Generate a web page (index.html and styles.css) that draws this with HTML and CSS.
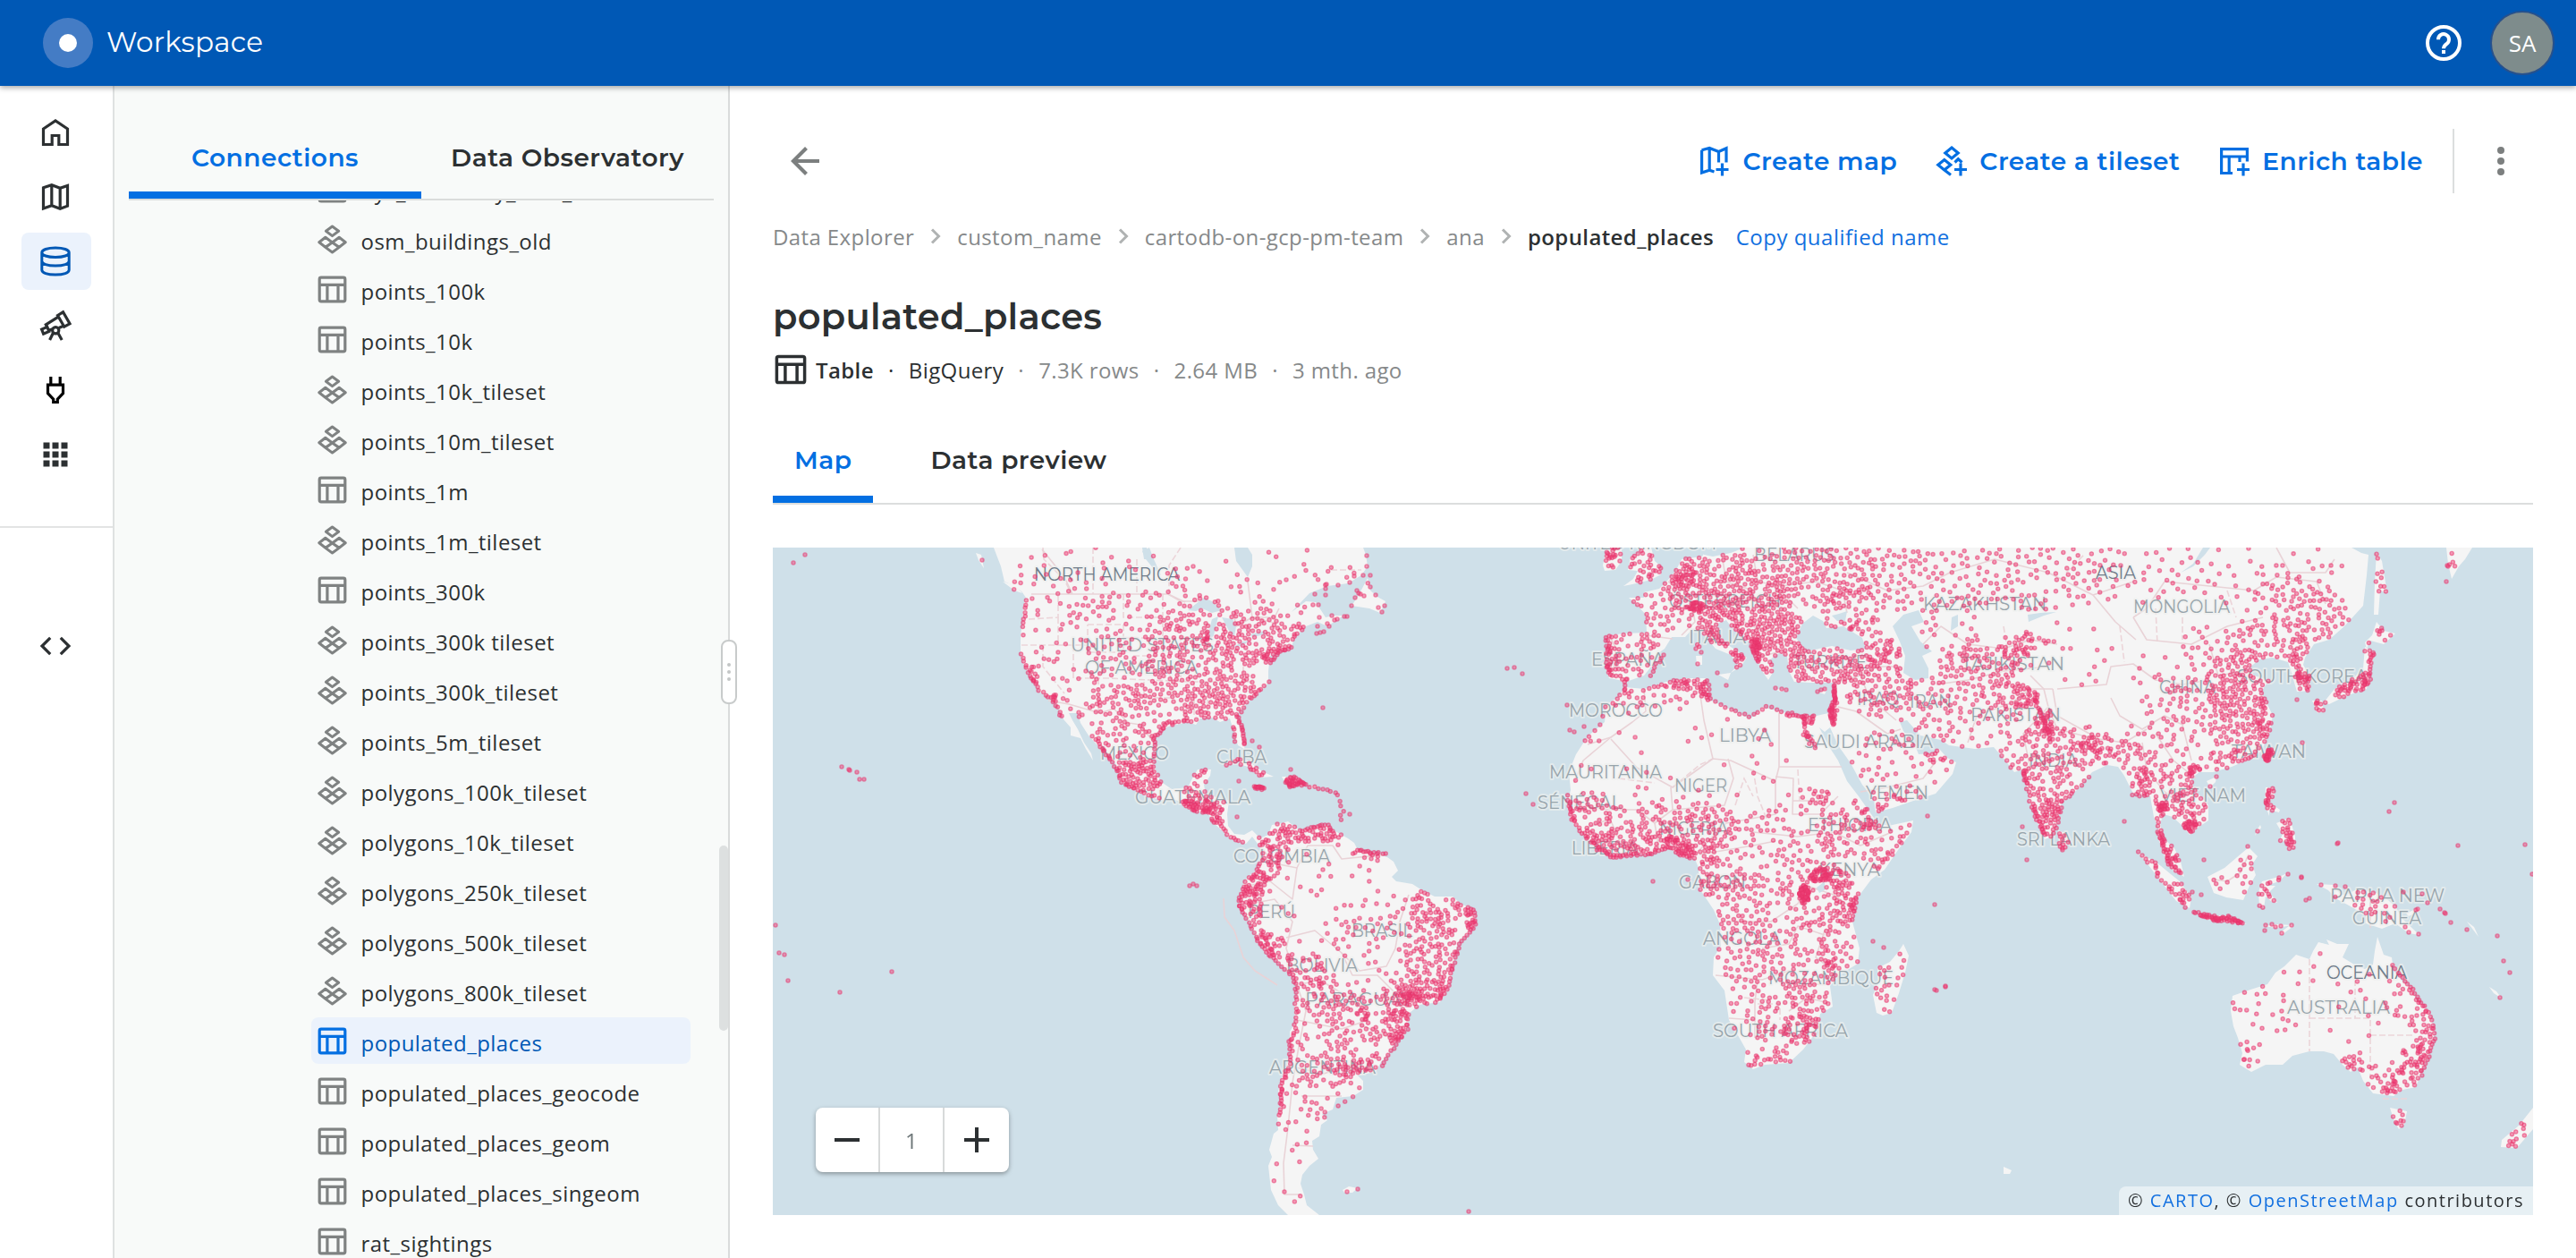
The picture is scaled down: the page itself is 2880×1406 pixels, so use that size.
FILE: index.html
```html
<!DOCTYPE html>
<html lang="en">
<head>
<meta charset="utf-8">
<title>Workspace - Data Explorer</title>
<link rel="stylesheet" href="styles.css">
</head>
<body>
<svg class="sprite" aria-hidden="true">
  <symbol id="i-table" viewBox="0 0 33 33"><g fill="none" stroke="currentColor" stroke-width="3.2"><rect x="2.2" y="3.1" width="28.6" height="26.8" rx="1.8"/><path d="M2 11.3H31M10.9 11.3V30M23 11.3V30"/></g></symbol>
  <symbol id="i-tiles" viewBox="0 0 33 33"><g fill="none" stroke="currentColor" stroke-width="3" stroke-linejoin="round"><path d="M16.5 2 23.6 7.3 16.5 12.6 9.4 7.3ZM8.8 14.2 16.5 20 8.8 25.2 1.8 19.7ZM24.2 14.2 31.2 19.7 24.2 25.2 16.5 20ZM16.5 20 24.2 25.4 16.5 31 8.8 25.4Z"/></g></symbol>
  <symbol id="i-chev" viewBox="0 0 12 20"><path d="M2 2.5 9.5 10 2 17.5" fill="none" stroke="currentColor" stroke-width="3"/></symbol>
</svg>

<header class="topbar">
  <div class="logo"><span class="logo-dot"></span></div>
  <span class="brand">Workspace</span>
  <svg class="help" viewBox="0 0 40 40"><circle cx="20" cy="20" r="18" fill="none" stroke="#fff" stroke-width="4"/><path d="M14 16.2a6 6 0 1 1 9.6 4.7c-2.2 1.7-3.6 2.6-3.6 5.4" fill="none" stroke="#fff" stroke-width="4"/><rect x="18" y="28" width="4" height="4" fill="#fff"/></svg>
  <div class="avatar">SA</div>
</header>

<div class="shell">
  <nav class="rail">
    <a class="rail-item"><svg viewBox="0 0 36 36"><path d="M4.5 31.5V14L18 5l13.500 9v17.500h-9.700v-10h-7.600v10Z"/></svg></a>
    <a class="rail-item"><svg viewBox="0 0 36 36"><path d="M4.500 7.800 13.800 4.800 23.200 8.200 31.500 5.500V28.200L23.200 31.200 13.800 27.800 4.500 31ZM13.800 5v23M23.200 8v23"/></svg></a>
    <a class="rail-item active"><svg viewBox="0 0 36 36"><path d="M2.800 8.200c0-3 6-5.200 15.200-5.200s15.200 2.200 15.200 5.200-6 5.300-15.200 5.300S2.800 11.200 2.800 8.200ZM2.800 8.200v19.600c0 3 6 5.300 15.200 5.300s15.200-2.300 15.200-5.300V8.200M2.800 17.800c0 3 6 5.300 15.200 5.300s15.200-2.300 15.200-5.300"/></svg></a>
    <a class="rail-item"><svg viewBox="0 0 36 36"><path d="M20.500 6.500 26.500 2.800 34 15.800 27.800 19.200ZM21.200 8.200 7.300 16.800 10.500 23.200M27 18.300 21.800 20.400M8.800 19.400 2.600 22.100 4.600 27.100 10.800 24.400ZM10.500 23.200 15.500 21.500M15.500 26 11.600 34M20.800 26 25.200 34" /><circle cx="18.200" cy="23.200" r="3.600"/></svg></a>
    <a class="rail-item plug"><svg viewBox="0 0 36 36"><path d="M12.800 3V12M23.200 3V12M9.500 12.200H26.500V21.500L20.300 28.200V31.500H15.700V28.200L9.500 21.500Z"/></svg></a>
    <a class="rail-item"><svg viewBox="0 0 36 36"><path class="solid" d="M4.500 4.500h7v7h-7zM14.500 4.500h7v7h-7zM24.500 4.500h7v7h-7zM4.500 14.500h7v7h-7zM14.500 14.500h7v7h-7zM24.500 14.500h7v7h-7zM4.500 24.500h7v7h-7zM14.500 24.500h7v7h-7zM24.500 24.500h7v7h-7z"/></svg></a>
    <hr class="rail-line">
    <a class="rail-item"><svg viewBox="0 0 36 36"><path d="M12.200 8.800 3 18l9.200 9.200M23.800 8.800 33 18l-9.200 9.200"/></svg></a>
  </nav>

  <aside class="sidebar">
    <div class="side-tabs">
      <button class="side-tab on">Connections</button>
      <button class="side-tab">Data Observatory</button>
    </div>
    <div class="tree-view">
      <ul class="tree" id="tree"></ul>
      <div class="scroll-thumb"></div>
    </div>
    <div class="grip"><i></i><i></i><i></i></div>
  </aside>

  <main class="main">
    <div class="toolbar">
      <svg class="back" viewBox="0 0 34 36"><path d="M33 18H4M18.500 3.500 4 18l14.500 14.500" fill="none" stroke="currentColor" stroke-width="4.200"/></svg>
      <div class="actions">
        <a class="action"><svg viewBox="0 0 36 36"><path d="M3.600 5.800 12.200 3.500 22.500 7.500 31 3.800V19.500M3.600 5.800V31L12.200 28.200 17.500 30M12.200 3.500V28.200M22.500 7.500V19.500M26.500 20.500V34.500M19.500 27.500H33.500"/></svg><span>Create map</span></a>
        <a class="action"><svg viewBox="0 0 36 36"><path d="M18 3 25.200 9 18 15 10.800 9ZM9.800 28 2.800 22.300 9.800 16.500 16.800 22.300 9.800 28 17 33.500M21.500 19.500 25.300 15.800 29.500 19.500M28 20.500V34.500M21 27.500H35"/></svg><span>Create a tileset</span></a>
        <a class="action"><svg viewBox="0 0 36 36"><path d="M16 31.500H3.600V4.600H32.400V18.500M3.600 13H32.400M12.200 13V31M24 13V19M28 20.500V34.500M21 27.500H35"/></svg><span>Enrich table</span></a>
      </div>
      <div class="kebab"><i></i><i></i><i></i></div>
    </div>

    <div class="crumbs">
      <span>Data Explorer</span><svg><use href="#i-chev"/></svg>
      <span>custom_name</span><svg><use href="#i-chev"/></svg>
      <span>cartodb-on-gcp-pm-team</span><svg><use href="#i-chev"/></svg>
      <span>ana</span><svg><use href="#i-chev"/></svg>
      <b>populated_places</b>
      <a class="copy">Copy qualified name</a>
    </div>

    <h1 class="title">populated_places</h1>

    <div class="meta">
      <svg><use href="#i-table"/></svg>
      <b>Table</b><i>·</i><span class="dark">BigQuery</span><i class="soft">·</i><span>7.3K rows</span><i class="soft">·</i><span>2.64 MB</span><i class="soft">·</i><span>3 mth. ago</span>
    </div>

    <div class="tabs">
      <button class="tab on">Map</button>
      <button class="tab">Data preview</button>
    </div>

    <section class="map" id="map">
      <svg class="base" viewBox="864 612 1968 746" id="base"></svg>
      <canvas class="points" id="points" width="1968" height="746"></canvas>
      <div class="zoom">
        <button><svg viewBox="0 0 28 28"><path d="M0 14H28"/></svg></button>
        <span>1</span>
        <button><svg viewBox="0 0 28 28"><path d="M0 14H28M14 0V28"/></svg></button>
      </div>
      <div class="credit">© <a>CARTO</a>, © <a>OpenStreetMap</a> contributors</div>
    </section>
  </main>
</div>
<script src="map.js"></script>
</body>
</html>
```
FILE: styles.css
```css
* { box-sizing: border-box; }
html, body { margin: 0; height: 100%; }
body {
  display: flex; flex-direction: column; overflow: hidden;
  background: #fff; color: #2c3032;
  font-family: "Open Sans", "Noto Sans", sans-serif; font-size: 24px; letter-spacing: 0.5px;
}
button { border: 0; background: none; padding: 0; margin: 0; color: inherit; font: inherit; letter-spacing: inherit; }
ul { list-style: none; margin: 0; padding: 0; }
i { font-style: normal; }
.sprite { display: none; }

.topbar {
  flex: none; height: 96px; display: flex; align-items: center; padding: 0 24px 0 48px;
  background: #0058b5; color: #fff; box-shadow: 0 2px 6px rgba(0, 0, 0, .35); z-index: 3;
}
.logo { width: 56px; height: 56px; border-radius: 50%; background: #447cc5; display: grid; place-items: center; }
.logo-dot { width: 20px; height: 20px; border-radius: 50%; background: #fff; }
.brand { margin-left: 15px; font: 400 31px/48px Montserrat, Inter, sans-serif; letter-spacing: .3px; padding-bottom: 2px; }
.help { width: 40px; height: 40px; margin-left: auto; margin-right: 32px; }
.avatar {
  width: 72px; height: 72px; border-radius: 50%; border: 2px solid #27518c; background: #7e8c8c;
  display: grid; place-items: center; font-size: 26px; letter-spacing: 0;
}

.shell { flex: 1; min-height: 0; display: flex; }

.rail { width: 128px; flex: none; border-right: 2px solid #dfe1e1; padding-top: 20px; display: flex; flex-direction: column; align-items: center; }
.rail-item { width: 78px; height: 64px; margin-bottom: 8px; display: grid; place-items: center; border-radius: 8px; }
.rail-item svg { width: 36px; height: 36px; margin-right: 2px; fill: none; stroke: #2c3032; stroke-width: 3.2; }
.rail-item .solid { fill: #2c3032; stroke: none; }
.rail-item.active { background: #ebf2fc; }
.rail-item.active svg { stroke: #0058b5; stroke-width: 3; }
.rail-item.plug svg { stroke: #000; }
.rail-line { width: 100%; height: 2px; border: 0; margin: 40px 0 100px; background: #e3e4e4; flex: none; }

.sidebar { width: 688px; flex: none; display: flex; flex-direction: column; background: #f8faf9; border-right: 2px solid #d9dbdb; position: relative; }
.side-tabs { flex: none; margin: 32px 16px 0; height: 96px; border-bottom: 2px solid #dadcdb; display: grid; grid-template-columns: 1fr 1fr; }
.side-tab { border-bottom: 8px solid transparent; padding-top: 9px; }
.side-tab, .tab { font: 600 28px/36px Montserrat, Inter, sans-serif; letter-spacing: .5px; }
.on { color: #036fe2; border-bottom-color: #036fe2; }
.tree-view { flex: 1; min-height: 0; overflow: hidden; position: relative; }
.tree { margin: -39px 42px 0 220px; }
.tree li { height: 52px; margin-bottom: 4px; padding-left: 7px; border-radius: 8px; display: flex; align-items: center; }
.tree svg { width: 33px; height: 33px; color: #7f8282; margin-right: 15.500px; }
.tree span { padding-top: 5px; letter-spacing: .45px; }
.tree .sel { background: #ebf2fc; color: #0058b5; }
.tree .sel svg { color: #036fe2; }
.scroll-thumb { position: absolute; right: 0; top: 721px; width: 10px; height: 207px; border-radius: 5px; background: #dde0e0; }
.grip {
  position: absolute; right: -10px; top: 619px; width: 18px; height: 72px; border: 2px solid #c8cbcb; border-radius: 8px;
  background: #fff; z-index: 2; display: flex; flex-direction: column; align-items: center; justify-content: center; gap: 4px;
}
.grip i { width: 4px; height: 4px; border-radius: 50%; background: #c3c6c6; }

.main { flex: 1; min-width: 0; padding: 48px 48px 0; display: flex; flex-direction: column; }
.toolbar { flex: none; height: 72px; display: flex; align-items: center; }
.back { width: 34px; height: 36px; margin-left: 19px; color: #7c7f7f; }
.actions { margin-left: auto; display: flex; gap: 43px; padding-right: 33px; height: 72px; border-right: 2px solid #dcdede; align-items: center; }
.action { display: flex; align-items: center; gap: 13px; color: #036fe2; font: 600 28px/36px Montserrat, Inter, sans-serif; letter-spacing: .5px; white-space: nowrap; }
.action svg { width: 36px; height: 36px; fill: none; stroke: #036fe2; stroke-width: 3.2; }
.kebab { width: 8px; margin: 0 32px 0 48px; display: grid; gap: 4px; }
.kebab i { width: 8px; height: 8px; border-radius: 50%; background: #7c7f7f; }

.crumbs { flex: none; margin-top: 28px; height: 40px; display: flex; align-items: center; color: #86898a; white-space: nowrap; letter-spacing: .4px; }
.crumbs svg { width: 12px; height: 20px; margin: 0 18px; color: #b0b3b3; }
.crumbs b, .meta b { font-weight: 600; color: #2c3032; }
.copy { margin-left: 24.500px; color: #1270e0; letter-spacing: .5px; }

.title { flex: none; margin: 46px 0 0; font: 600 40px/48px Montserrat, Inter, sans-serif; letter-spacing: .25px; height: 48px; }
.meta { flex: none; margin-top: 15px; height: 40px; display: flex; align-items: center; color: #86898a; white-space: nowrap; letter-spacing: .38px; }
.meta svg { width: 36px; height: 36px; color: #2c3032; margin: 0 10px 0 2px; }
.meta i { width: 39px; text-align: center; color: #2c3032; }
.meta .soft { color: #86898a; }
.meta .dark { color: #2c3032; }

.tabs { flex: none; margin-top: 37px; height: 94px; border-bottom: 2px solid #dcdede; display: flex; gap: 40px; }
.tab { border-bottom: 8px solid transparent; padding: 4px 24px 0; }
.tab.on, .side-tab.on { border-bottom-color: #036fe2; }

.map { position: relative; flex: none; margin-top: 48px; height: 746px; background: #cfe0e9; overflow: hidden; }
.base, .points { position: absolute; inset: 0; width: 1968px; height: 746px; }
.land { fill: #f5f5f5; }
.water { fill: #cfe0e9; }
.border { fill: none; stroke: #e9d3d7; stroke-width: 1.6; stroke-linejoin: round; }
.state { fill: none; stroke: #ecd5d9; stroke-width: 1.6; stroke-dasharray: 7 3; }
.lbl { font: 400 20px Montserrat, Inter, sans-serif; letter-spacing: 0; fill: #97a4ab; stroke: rgba(238, 240, 238, .65); stroke-width: 4px; paint-order: stroke; stroke-linejoin: round; }
.lbl.big { fill: #6f7c8a; }
.zoom {
  position: absolute; left: 48px; top: 626px; width: 216px; height: 72px; border-radius: 8px; background: #fff;
  box-shadow: 0 2px 5px rgba(0, 0, 0, .35); display: grid; grid-template-columns: 70px 74px 72px; align-items: stretch;
}
.zoom > * { display: grid; place-items: center; }
.zoom span { border: solid #d8dada; border-width: 0 2px; color: #6d7678; }
.zoom svg { width: 28px; height: 28px; stroke: #2c3032; stroke-width: 4; }
.credit {
  position: absolute; right: 0; bottom: 0; height: 32px; padding: 0 10px 0 10px; border-top-left-radius: 8px;
  background: rgba(255, 255, 255, .5); font-size: 20px; line-height: 32px; letter-spacing: 1.5px; white-space: nowrap;
}
.credit a { color: #1270e0; }
```
FILE: map.js
```js
// Sidebar resources: t = tileset, d = table
const items = [
  ["d", "nyc_boundary_data_old"], ["t", "osm_buildings_old"], ["d", "points_100k"], ["d", "points_10k"],
  ["t", "points_10k_tileset"], ["t", "points_10m_tileset"], ["d", "points_1m"], ["t", "points_1m_tileset"],
  ["d", "points_300k"], ["t", "points_300k tileset"], ["t", "points_300k_tileset"], ["t", "points_5m_tileset"],
  ["t", "polygons_100k_tileset"], ["t", "polygons_10k_tileset"], ["t", "polygons_250k_tileset"],
  ["t", "polygons_500k_tileset"], ["t", "polygons_800k_tileset"], ["d", "populated_places"],
  ["d", "populated_places_geocode"], ["d", "populated_places_geom"], ["d", "populated_places_singeom"], ["d", "rat_sightings"]
];
document.getElementById("tree").innerHTML = items.map(([k, n]) =>
  `<li${n === "populated_places" ? ' class="sel"' : ""}><svg><use href="#i-${k === "t" ? "tiles" : "table"}"/></svg><span>${n}</span></li>`).join("");

// Land outlines
const land = [
  // Americas
  "1111,612 1114,620 1119,633 1123,650 1135,655 1143,662 1147,668 1144,677 1143,697 1141,710 1141,730 1144,742 1150,752 1156,763 1162,773 1174,780 1181,787 1186,797 1189,804 1197,813 1197,822 1208,825 1214,837 1222,850 1220,842 1212,830 1205,815 1199,805 1195,797 1205,797 1208,808 1217,822 1226,832 1237,843 1247,853 1250,863 1254,875 1266,882 1279,888 1299,895 1306,892 1317,895 1324,902 1337,907 1351,910 1357,920 1368,930 1375,937 1384,940 1393,943 1400,935 1406,943 1410,950 1411,960 1404,973 1395,980 1390,988 1387,998 1385,1012 1392,1022 1398,1032 1406,1050 1415,1065 1426,1073 1441,1086 1448,1095 1451,1108 1447,1123 1448,1143 1442,1153 1443,1173 1440,1187 1432,1207 1429,1220 1432,1233 1428,1247 1429,1263 1424,1267 1419,1285 1422,1293 1418,1303 1421,1330 1429,1347 1440,1358 1475,1358 1461,1347 1458,1335 1454,1323 1456,1313 1464,1303 1474,1295 1468,1285 1467,1275 1475,1270 1477,1257 1484,1252 1478,1245 1490,1240 1494,1227 1513,1225 1524,1218 1524,1208 1518,1202 1538,1198 1544,1187 1553,1177 1561,1163 1570,1157 1575,1140 1576,1132 1587,1123 1610,1120 1618,1107 1623,1090 1626,1070 1630,1053 1642,1043 1650,1032 1648,1017 1633,1010 1624,1002 1604,1002 1590,995 1579,988 1561,985 1556,980 1563,973 1558,963 1551,958 1534,953 1518,950 1514,942 1507,937 1491,928 1484,922 1467,925 1453,928 1440,918 1433,920 1422,922 1418,933 1409,937 1400,928 1391,933 1380,932 1373,923 1372,910 1374,895 1364,892 1348,888 1346,877 1353,867 1354,860 1339,860 1333,870 1328,880 1310,882 1297,873 1292,860 1288,847 1290,830 1293,820 1306,812 1328,807 1337,810 1342,803 1355,802 1364,807 1375,803 1380,820 1384,833 1391,837 1393,827 1384,807 1384,797 1395,785 1409,773 1418,763 1418,750 1420,733 1427,730 1444,723 1447,713 1460,700 1473,695 1484,700 1502,688 1490,688 1482,690 1471,673 1460,672 1444,684 1464,663 1484,655 1507,652 1522,643 1529,633 1527,620 1524,612",
  "1529,646 1518,667 1511,677 1531,680 1543,685 1549,672 1540,667 1532,660",
  "1121,650 1135,654 1143,663 1134,660", "1091,618 1097,620 1100,635 1094,626",
  "1368,857 1380,848 1395,850 1411,862 1424,868 1409,869 1395,857 1380,852", "1433,868 1449,868 1460,877 1440,880", "1402,878 1416,880 1410,883 1402,881", "1465,878 1473,878 1472,881 1465,881",
  "1501,1330 1508,1326 1518,1328 1512,1333 1503,1333",
  // Africa, Europe and Asia
  "1909,612 1903,622 1880,625 1874,637 1865,648 1855,658 1838,662 1838,668 1821,668 1831,677 1840,687 1841,707 1817,708 1797,710 1798,733 1795,747 1799,758 1810,760 1815,763 1838,755 1846,745 1850,733 1861,725 1869,712 1884,712 1892,703 1903,707 1918,725 1935,732 1943,743 1935,752 1947,744 1953,735 1935,723 1920,708 1920,697 1930,693 1935,700 1956,718 1962,733 1970,750 1977,760 1983,750 1979,737 1989,730 1998,733 2000,750 2006,762 2023,763 2044,763 2052,763 2050,780 2044,797 2031,800 2010,800 1989,795 1970,790 1962,800 1956,803 1935,793 1911,782 1909,770 1907,758 1884,758 1863,762 1838,770 1817,768 1808,780 1796,787 1794,807 1775,823 1762,843 1754,863 1756,883 1752,900 1756,917 1770,933 1785,950 1804,960 1825,955 1842,955 1867,948 1880,958 1895,960 1899,970 1899,992 1908,1005 1916,1017 1923,1033 1924,1057 1916,1070 1915,1090 1928,1107 1933,1140 1943,1157 1952,1173 1950,1187 1960,1195 1973,1190 2000,1188 2016,1173 2031,1153 2035,1133 2049,1125 2046,1102 2056,1090 2077,1077 2079,1060 2071,1030 2077,1003 2092,983 2107,972 2122,950 2137,930 2139,917 2111,923 2099,920 2092,910 2078,890 2065,873 2055,850 2044,833 2034,813 2040,818 2046,813 2055,833 2069,853 2082,877 2095,893 2097,908 2116,903 2145,893 2164,887 2183,865 2187,852 2177,847 2168,837 2162,842 2145,843 2141,833 2128,817 2124,807 2132,805 2147,822 2170,827 2179,833 2208,837 2229,835 2242,850 2252,863 2261,860 2267,883 2269,897 2278,920 2286,938 2295,935 2300,920 2305,897 2322,883 2339,863 2356,855 2368,857 2375,867 2385,887 2404,890 2408,913 2413,925 2413,938 2421,960 2429,972 2442,980 2438,963 2431,948 2419,937 2415,920 2419,910 2429,913 2440,923 2448,933 2457,925 2469,917 2469,900 2453,882 2450,870 2459,863 2474,863 2495,857 2511,850 2528,840 2537,820 2541,800 2533,783 2528,773 2537,760 2520,755 2514,747 2526,737 2541,735 2558,740 2562,752 2568,773 2583,772 2583,757 2575,743 2577,735 2587,720 2604,715 2621,700 2642,677 2646,643 2648,620 2640,618 2629,612",
  "1838,612 1829,620 1823,622 1820,637 1831,638 1826,647 1815,655 1825,653 1846,648 1857,642 1857,633 1850,627 1846,612", "1796,612 1792,632 1794,638 1806,637 1813,627 1813,612",
  "1896,733 1903,733 1903,743 1897,743", "1897,718 1901,720 1900,728 1896,726", "1921,754 1935,752 1932,760", "1984,770 1999,771 1990,773", "2034,774 2043,769 2040,776",
  "2128,1055 2134,1068 2130,1087 2123,1110 2115,1132 2105,1135 2098,1132 2094,1112 2100,1098 2099,1082 2113,1075 2123,1063",
  "2301,928 2309,931 2313,940 2307,952 2302,945",
  "2390,953 2410,963 2427,977 2437,985 2450,1003 2448,1015 2433,1007 2412,980 2399,963", "2454,1020 2468,1024 2490,1023 2512,1033 2490,1031 2468,1028",
  "2514,947 2524,957 2518,966 2522,978 2515,990 2508,1006 2489,1003 2475,998 2468,980 2487,970",
  "2529,985 2548,980 2557,976 2548,985 2533,990 2544,990 2537,997 2546,1009 2540,1008 2533,1002 2531,1015 2526,1013 2525,997",
  "2590,988 2609,989 2617,1000 2624,1000 2636,993 2663,1000 2678,1013 2686,1027 2705,1045 2693,1043 2678,1032 2663,1038 2645,1032 2645,1023 2626,1012 2613,1005 2603,995",
  "2690,1021 2705,1014 2706,1018 2693,1024", "2529,1035 2545,1033 2562,1034 2546,1037", "2548,1043 2562,1033 2564,1035 2551,1045",
  "2533,880 2541,880 2543,887 2537,897 2549,905 2548,908 2537,905 2537,912 2532,898", "2545,920 2560,914 2566,935 2566,947 2559,950 2556,940 2548,941 2552,932", "2527,922 2528,925 2521,934 2523,928",
  "2539,837 2542,840 2537,851 2532,853 2531,845", "2467,873 2478,868 2477,874 2471,880",
  "2644,723 2655,730 2650,750 2646,770 2625,777 2604,787 2598,785 2610,770 2629,760 2642,747", "2585,783 2596,783 2598,795 2591,797", "2657,695 2665,705 2678,708 2665,720 2650,716 2646,725 2644,718 2652,710",
  "2657,617 2663,627 2669,663 2661,660 2659,687 2654,687 2655,650", "2735,612 2737,630 2741,647 2749,633 2756,625 2764,612",
  "2601,1050 2613,1055 2626,1055 2619,1070 2632,1078 2644,1083 2653,1078 2655,1063 2658,1047 2665,1067 2674,1070 2676,1085 2686,1097 2697,1105 2701,1117 2716,1130 2722,1153 2718,1173 2709,1193 2701,1215 2686,1218 2676,1225 2653,1222 2642,1208 2636,1193 2628,1198 2619,1190 2609,1178 2598,1175 2582,1175 2563,1180 2552,1190 2533,1190 2517,1198 2504,1190 2507,1177 2502,1160 2497,1147 2494,1130 2496,1113 2510,1108 2535,1100 2544,1087 2554,1080 2567,1067 2582,1072 2586,1063 2592,1053 2604,1056",
  "2672,1238 2691,1242 2688,1257 2682,1262 2677,1254", "2832,1238 2832,1262 2814,1283 2796,1282 2797,1274 2816,1258", "2783,1103 2791,1108 2797,1116 2788,1110", "2240,1304 2249,1308 2247,1312 2240,1312", "2758,1030 2766,1036 2771,1047"
];
const water = [
  "1380,612 1382,627 1395,645 1400,633 1400,620 1395,612", "1285,612 1290,625 1298,643 1290,636 1281,625 1277,616", "1277,612 1282,612 1283,625 1279,625",
  "1328,682 1346,668 1355,672 1366,682 1355,685 1344,680 1337,683", "1351,707 1355,692 1362,689 1357,710 1353,715", "1366,690 1378,692 1382,700 1380,711 1374,705", "1377,724 1390,717 1397,716 1390,721", "1398,709 1414,705 1415,709 1400,712",
  "2008,713 2015,697 2027,688 2038,694 2042,702 2061,700 2082,713 2086,725 2069,727 2048,722 2019,728", "2048,688 2056,686 2065,683 2063,694 2054,694", "1984,735 1992,730 1994,735 1988,741",
  "2116,700 2128,687 2145,682 2151,695 2137,700 2147,717 2160,728 2149,733 2156,747 2156,758 2141,760 2128,752 2130,733 2124,717",
  "2031,992 2040,985 2040,995 2034,998", "2438,640 2452,633 2465,620 2471,612 2463,612 2452,630", "2182,690 2189,687 2189,700 2181,705", "2267,687 2281,685 2299,684 2285,688 2268,695", "1899,612 1909,612 1935,612 1950,612 1935,618 1915,622 1905,620"
];
const borders = [
  "1153,664 1306,664 1320,672 1340,672", "1306,664 1325,673", "1380,690 1382,700 1400,690 1425,690 1430,680", "1172,783 1195,787 1230,797 1245,792 1262,808 1275,810 1290,830", "1165,614 1190,645 1199,664", "1395,650 1400,690 1428,697",
  "1408,945 1425,965 1450,970 1462,945 1490,945 1500,960 1550,955", "1395,990 1420,985 1445,1005 1450,970", "1398,1010 1425,1005 1445,1030 1438,1060 1448,1090", "1438,1048 1470,1040 1500,1065 1520,1085 1550,1080 1560,1060 1565,1030 1575,1000", "1455,1100 1475,1095 1500,1110 1530,1130 1520,1145 1555,1160", "1448,1095 1460,1130 1452,1170 1445,1210 1440,1260 1435,1300 1436,1335 1455,1335", "1445,1280 1468,1281", "1500,1065 1512,1090 1540,1090 1560,1110", "1450,1140 1500,1150 1530,1140", "1435,1190 1480,1200 1510,1190", "1455,1225 1500,1225", "1368,1004 1369,1025 1380,1040 1390,1070 1403,1085 1428,1101",
  "1775,832 1801,824 1825,807 1840,795 1838,770", "1801,824 1770,850 1760,875", "1801,826 1830,858 1870,880 1915,848 1905,805 1900,770", "1915,848 1935,850 1985,873 1989,857 1989,797", "1989,857 2059,857", "1932,848 1938,870 1928,900 1870,905 1868,880", "1985,873 1985,910 1930,920 1900,950", "1985,868 2005,870 2004,910 2035,910 2055,890", "2005,895 2040,895", "1960,930 2010,935 2050,930 2080,945 2115,930", "1760,900 1800,905 1830,905 1850,920 1870,905", "1775,925 1800,915 1815,950", "1850,920 1855,950", "1900,955 1930,950 1960,945 1985,940", "1925,1030 1980,1030 2010,1010 2020,990 2050,1000 2077,1020", "1918,1090 1970,1095 2000,1085 2015,1100 2045,1100", "1965,1095 1962,1120 1962,1160", "1933,1138 1962,1140", "2000,1130 2020,1115 2040,1120", "2040,1040 2030,1070 2050,1085", "1970,1060 2000,1055 2010,1035 2040,1045",
  "1800,712 1807,725 1803,755", "1840,710 1870,714", "1865,650 1890,665 1895,695 1880,710", "1895,665 1930,665 1960,670 1990,660 2010,680", "1925,620 1930,650 1960,660", "1960,620 1965,650 1990,655 2030,650 2060,660 2065,685", "1930,690 1950,695 1970,705 2000,705", "1965,735 1990,728", "2052,763 2080,755 2100,745 2125,745", "2080,755 2090,780 2120,805", "2055,790 2075,795 2110,820 2125,815", "2080,885 2110,880 2150,870 2165,850",
  "2065,640 2110,660 2150,655 2180,640 2230,625 2290,640 2340,665 2385,650", "2150,720 2170,700 2200,720 2240,725 2270,715 2300,720", "2165,765 2200,760 2240,750 2290,745", "2200,830 2210,800 2250,785 2270,770 2295,770", "2270,860 2262,820 2290,790 2285,770 2270,755",
  "2290,790 2300,815 2340,825 2375,830 2400,815", "2385,690 2400,680 2420,650 2470,655 2520,660 2545,645 2590,650 2600,675", "2385,690 2400,715 2450,720 2490,700 2530,690", "2295,770 2300,800 2345,825", "2300,770 2355,765 2360,745 2385,742 2410,760 2440,765 2470,760", "2340,665 2365,695 2388,715", "2360,780 2370,800 2395,815 2420,800 2440,810 2450,850", "2470,720 2480,755 2510,750", "2410,820 2430,850 2455,870", "2395,830 2400,860 2420,885 2440,900", "2650,1000 2650,1037", "2514,955 2505,975 2490,985 2475,983", "2545,612 2560,640 2600,640 2610,625"
];
const states = [
  "1166,612 1167,625 1190,648 1198,664", "1222,612 1222,664", "1271,625 1271,664", "1320,612 1307,632 1307,662", "1150,692 1183,690 1183,664", "1142,721 1200,721 1216,721", "1183,690 1183,721", "1166,721 1166,745 1190,775", "1200,721 1200,758 1240,758 1330,762 1400,762", "1228,758 1228,795", "1216,698 1256,698 1256,729 1216,729 1216,698", "1256,664 1256,690 1300,690", "1256,713 1300,713", "1228,729 1228,758", "1267,733 1310,733", "1279,762 1279,780 1310,780", "1300,664 1300,733 1310,760 1310,780", "1320,690 1320,760", "1335,762 1335,800", "1350,762 1350,800", "1390,735 1390,760", "1488,637 1522,637",
  "2582,1072 2582,1175", "2582,1138 2650,1138 2650,1205", "2633,1095 2633,1138", "2650,1157 2700,1157", "2664,1228 2692,1228",
  "1870,880 1900,855 1915,848", "1940,900 1950,870 1960,890", "1960,860 1965,890 1975,915", "2010,860 2012,895", "1810,870 1850,875", "2240,700 2245,730", "2310,640 2330,620", "2370,700 2375,740", "2410,680 2412,720", "2440,690 2440,715", "2490,660 2500,690", "1950,1115 1980,1118", "1965,1122 1990,1122 1990,1140"
];
const labels = [
  ["NORTH AMERICA", 1156, 1319, 649, 1], ["UNITED STATES", 1197, 1357, 728], ["OF AMERICA", 1213, 1339, 753], ["MÉXICO", 1230, 1307, 849], ["CUBA", 1360, 1416, 853], ["GUATEMALA", 1269, 1398, 898], ["COLOMBIA", 1379, 1487, 964],
  ["PERÚ", 1395, 1448, 1026], ["BRASIL", 1511, 1579, 1047], ["BOLIVIA", 1438, 1518, 1086], ["PARAGUAY", 1459, 1579, 1124], ["ARGENTINA", 1419, 1538, 1200],
  ["UNITED KINGDOM", 1742, 1919, 614], ["BELARUS", 1961, 2051, 627], ["ÖSTERREICH", 1866, 1991, 679], ["KAZAKHSTAN", 2150, 2288, 682], ["ITALIA", 1888, 1952, 719], ["ESPAÑA", 1779, 1861, 744], ["TÜRKIYE", 2005, 2087, 747], ["TAJIKISTAN", 2193, 2308, 749],
  ["MOROCCO", 1754, 1859, 801], ["IRAQ", 2076, 2123, 788], ["IRAN", 2135, 2182, 791], ["PAKISTAN", 2203, 2304, 806], ["LIBYA", 1922, 1980, 829], ["SAUDI ARABIA", 2017, 2161, 836], ["MAURITANIA", 1732, 1858, 870], ["NIGER", 1872, 1931, 885], ["YEMEN", 2086, 2156, 893], ["SÉNÉGAL", 1719, 1813, 904], ["NIGERIA", 1855, 1932, 933], ["ETHIOPIA", 2021, 2115, 929], ["LIBERIA", 1757, 1831, 955], ["KENYA", 2033, 2102, 979], ["GABON", 1877, 1952, 993],
  ["ASIA", 2343, 2388, 647, 1], ["MONGOLIA", 2385, 2493, 685], ["CHINA", 2414, 2477, 775], ["SOUTH KOREA", 2501, 2647, 763], ["TAIWAN", 2495, 2578, 847], ["INDIA", 2268, 2323, 857], ["VIET NAM", 2415, 2511, 896], ["SRI LANKA", 2255, 2359, 945],
  ["ANGOLA", 1904, 1991, 1056], ["MOZAMBIQUE", 1977, 2117, 1100], ["SOUTH AFRICA", 1915, 2066, 1159], ["PAPUA NEW", 2605, 2733, 1008], ["GUINEA", 2630, 2707, 1033], ["OCEANIA", 2601, 2691, 1094, 1], ["AUSTRALIA", 2557, 2672, 1133]
];
const poly = (cls, pts) => `<polygon class="${cls}" points="${pts}"/>`;
const line = (cls, pts) => `<polyline class="${cls}" points="${pts}"/>`;
document.getElementById("base").innerHTML =
  land.map(p => poly("land", p)).join("") + states.map(p => line("state", p)).join("") + borders.map(p => line("border", p)).join("") +
  water.map(p => poly("water", p)).join("") +
  labels.map(([t, a, b, y, big]) => `<text class="lbl${big ? " big" : ""}" x="${a}" y="${y}" textLength="${b - a}" lengthAdjust="spacingAndGlyphs">${t}</text>`).join("");

// Populated places layer
let seed = 7;
const rnd = () => { seed = (seed * 1664525 + 1013904223) % 4294967296; return seed / 4294967296; };
const canvas = document.getElementById("points");
const ctx = canvas.getContext("2d");
const shape = list => { const p = new Path2D(); list.forEach(s => p.addPath(new Path2D("M" + s.split(" ").join("L") + "Z"))); return p; };
const lakes = shape(water);
const landShapes = land.map(s => shape([s]));
const onLand = (x, y) => landShapes.some(p => ctx.isPointInPath(p, x, y)) && !ctx.isPointInPath(lakes, x, y);
const dots = [];
const cell = new Map();
const key = (x, y) => (x >> 3) + "," + (y >> 3);
const put = (x, y) => { dots.push([x, y]); const k = key(x, y); cell.has(k) ? cell.get(k).push([x, y]) : cell.set(k, [[x, y]]); };
const near = (x, y, d) => {
  for (let i = -1; i < 2; i++) for (let j = -1; j < 2; j++)
    for (const q of cell.get(((x >> 3) + i) + "," + ((y >> 3) + j)) || []) if (Math.hypot(q[0] - x, q[1] - y) < d) return true;
  return false;
};
// [cx, cy, rx, ry, count, min distance]
const blobs = [
  [1230, 645, 105, 35, 75, 6], [1420, 650, 110, 38, 60, 6], [1190, 720, 50, 62, 75, 5], [1265, 725, 60, 70, 170, 5], [1345, 735, 60, 70, 330, 4], [1410, 710, 50, 30, 130, 4], [1370, 780, 45, 25, 90, 4], [1270, 795, 60, 30, 110, 4],
  [1427, 735, 14, 12, 22, 2], [1351, 717, 6, 12, 20, 1], [1156, 755, 6, 12, 12, 1], [1180, 781, 7, 5, 12, 1], [1210, 785, 20, 20, 14, 3],
  [1255, 840, 45, 30, 70, 4], [1275, 866, 30, 18, 110, 3], [1340, 900, 20, 8, 110, 1], [1358, 910, 14, 12, 50, 1], [1345, 890, 25, 18, 30, 4], [1447, 874, 14, 6, 90, 1], [1408, 880, 7, 4, 40, 0], [1395, 858, 30, 12, 36, 3], [1342, 864, 9, 5, 14, 1],
  [1425, 940, 20, 22, 80, 3], [1470, 930, 35, 12, 80, 3], [1417, 965, 15, 22, 55, 2], [1400, 990, 14, 22, 80, 2], [1398, 1020, 14, 25, 45, 2], [1420, 1060, 18, 20, 40, 3], [1455, 1085, 30, 22, 60, 3], [1475, 1110, 22, 26, 55, 3], [1535, 955, 25, 8, 16, 2],
  [1500, 1000, 100, 60, 70, 7], [1550, 1060, 80, 60, 110, 6], [1615, 1015, 36, 28, 95, 3], [1645, 1028, 7, 18, 32, 1], [1600, 1070, 30, 55, 120, 4], [1590, 1110, 30, 16, 75, 3], [1577, 1115, 10, 7, 40, 1], [1560, 1130, 22, 35, 85, 3], [1565, 1150, 14, 22, 35, 2], [1520, 1150, 40, 45, 105, 4], [1480, 1160, 40, 60, 80, 5], [1515, 1195, 25, 10, 50, 2], [1475, 1220, 50, 40, 55, 5], [1450, 1300, 35, 60, 20, 8], [1523, 1134, 6, 8, 20, 1],
  [1885, 655, 30, 32, 100, 4], [1882, 645, 14, 13, 45, 2], [1896, 679, 10, 6, 70, 1], [1850, 685, 35, 30, 45, 5], [1825, 735, 40, 30, 70, 4], [1798, 730, 5, 22, 26, 2], [1915, 660, 45, 50, 140, 4], [1955, 680, 50, 50, 235, 4], [1925, 710, 30, 40, 80, 3], [1945, 735, 12, 12, 22, 2], [1962, 728, 6, 15, 85, 1], [1985, 715, 35, 40, 170, 4], [1990, 630, 70, 30, 110, 5], [2040, 640, 60, 45, 140, 5], [2070, 665, 25, 25, 40, 3], [2110, 640, 60, 45, 95, 6], [2190, 640, 70, 40, 80, 7], [2280, 645, 90, 38, 120, 7], [2400, 640, 80, 40, 55, 8], [2530, 640, 90, 40, 55, 8],
  [1838, 630, 20, 24, 55, 2], [1803, 625, 11, 15, 36, 2], [2040, 742, 60, 22, 130, 4], [2105, 728, 25, 14, 65, 2], [2080, 700, 28, 14, 40, 2], [2049, 790, 5, 20, 75, 1], [2100, 770, 40, 30, 105, 4], [2150, 790, 50, 40, 75, 5], [2045, 698, 8, 8, 6, 2],
  [1890, 765, 30, 6, 50, 2], [1850, 775, 60, 20, 50, 4], [1910, 770, 10, 14, 20, 2], [2022, 815, 6, 25, 30, 1], [2015, 798, 18, 4, 26, 1], [1870, 840, 130, 70, 60, 10], [2130, 850, 60, 45, 40, 7], [2100, 898, 30, 12, 35, 2], [2145, 833, 50, 10, 18, 2], [2170, 843, 18, 12, 18, 2], [2110, 860, 40, 40, 14, 7],
  [1775, 915, 26, 30, 85, 3], [1800, 945, 35, 16, 85, 3], [1835, 915, 40, 22, 85, 3], [1850, 945, 40, 12, 65, 3], [1870, 940, 8, 5, 30, 0], [1885, 955, 12, 12, 55, 2], [1900, 925, 45, 28, 120, 4], [1910, 975, 14, 30, 60, 2], [1955, 960, 60, 60, 125, 6], [2020, 930, 40, 50, 60, 6], [2065, 935, 30, 32, 70, 4], [2110, 940, 30, 35, 35, 5], [2034, 892, 18, 8, 20, 3], [2090, 915, 10, 14, 22, 1],
  [2017, 999, 6, 11, 150, 0], [2036, 979, 14, 8, 105, 1], [2055, 985, 18, 14, 50, 2], [2030, 1000, 40, 40, 75, 4], [2060, 1010, 18, 24, 40, 3], [2071, 1018, 4, 14, 18, 1], [1940, 1010, 40, 40, 90, 5], [1950, 1060, 40, 40, 65, 6], [2010, 1060, 50, 45, 100, 5], [2045, 1072, 8, 14, 22, 2], [2060, 1065, 30, 40, 35, 5], [2010, 1140, 45, 45, 130, 4], [2010, 1150, 16, 18, 30, 2], [2026, 1142, 8, 10, 18, 1], [1950, 1130, 30, 60, 40, 6], [1975, 1185, 35, 10, 26, 2], [2113, 1095, 22, 40, 36, 6],
  [2215, 745, 50, 25, 110, 4], [2270, 715, 30, 10, 40, 2], [2250, 730, 20, 12, 35, 2], [2240, 775, 25, 20, 60, 3], [2265, 780, 14, 12, 45, 2], [2285, 805, 12, 14, 45, 1], [2290, 815, 8, 14, 35, 1], [2180, 720, 40, 60, 40, 6], [2200, 790, 60, 45, 55, 7], [2310, 825, 50, 16, 80, 3], [2345, 840, 25, 16, 65, 2], [2290, 840, 55, 30, 80, 5], [2280, 880, 40, 40, 95, 4], [2262, 868, 4, 12, 14, 1], [2290, 920, 14, 26, 60, 3], [2307, 940, 7, 12, 26, 1], [2310, 730, 60, 40, 22, 9],
  [2385, 840, 30, 30, 50, 4], [2395, 880, 16, 22, 50, 2], [2430, 880, 30, 30, 60, 4], [2418, 902, 6, 6, 45, 0], [2450, 900, 22, 28, 70, 3], [2449, 925, 8, 8, 55, 0], [2452, 862, 8, 7, 36, 1], [2415, 935, 6, 30, 26, 2], [2430, 965, 10, 16, 24, 1],
  [2510, 810, 40, 45, 165, 4], [2505, 765, 40, 40, 165, 4], [2440, 800, 40, 45, 80, 5], [2440, 760, 60, 40, 38, 6], [2490, 850, 30, 12, 30, 2], [2533, 800, 10, 30, 30, 2], [2560, 690, 50, 50, 150, 4], [2570, 740, 14, 32, 50, 3], [2570, 755, 6, 6, 18, 1], [2580, 765, 8, 12, 18, 2], [2600, 700, 30, 40, 40, 5], [2500, 720, 60, 30, 38, 6],
  [2537, 845, 6, 10, 45, 1], [2646, 745, 10, 30, 30, 2], [2625, 768, 26, 12, 60, 2], [2592, 787, 8, 10, 20, 1], [2660, 712, 16, 12, 12, 3], [2660, 650, 8, 40, 14, 4],
  [2537, 890, 8, 18, 24, 1], [2555, 930, 14, 24, 45, 2], [2420, 975, 30, 35, 32, 3], [2440, 1005, 14, 12, 14, 3], [2485, 1027, 35, 6, 85, 1], [2497, 975, 32, 35, 24, 5], [2538, 998, 20, 20, 22, 3], [2650, 1015, 50, 30, 34, 5],
  [2600, 1110, 100, 60, 40, 12], [2690, 1110, 25, 40, 26, 4], [2710, 1150, 15, 40, 50, 3], [2700, 1190, 18, 26, 60, 2], [2670, 1205, 35, 22, 50, 3], [2673, 1215, 10, 8, 25, 1], [2632, 1188, 14, 14, 26, 2], [2509, 1180, 8, 18, 18, 1], [2520, 1140, 40, 50, 24, 7], [2684, 1246, 10, 14, 14, 2], [2815, 1268, 20, 18, 22, 3], [2745, 630, 14, 20, 5, 4]
];
for (const [cx, cy, rx, ry, count, d] of blobs) {
  const n = count * (d < 2 ? .42 : d < 4 ? .55 : .68);
  for (let i = 0; i < n; i++)
    for (let k = 0; k < 8; k++) {
      const a = rnd() * 6.2832, r = Math.sqrt(rnd()), x = cx + rx * r * Math.cos(a), y = cy + ry * r * Math.sin(a);
      if (onLand(x, y) && !near(x, y, d * .85)) { put(x, y); break; }
    }
}
// Coastal chains: "x,y x,y ..." with spacing
const chains = [
  ["1147,672 1144,700 1147,705", 4], ["1143,735 1152,755 1162,772 1176,780 1184,795 1189,804", 4], ["1222,822 1237,843 1250,862 1254,875 1275,885 1299,893", 4], ["1290,850 1291,825 1306,808 1335,806", 4], ["1384,800 1390,820 1391,835", 2.5], ["1380,812 1382,832", 4], ["1360,915 1375,935 1392,943", 3.5],
  ["1418,763 1395,785 1384,800", 7], ["1420,740 1432,728 1446,722", 3], ["1447,712 1462,698", 5], ["1467,925 1484,922 1494,935", 3], ["1499,895 1501,907 1497,922", 5], ["1460,878 1492,885 1499,893", 5], ["1518,950 1551,955", 3],
  ["1387,998 1385,1012 1398,1035 1408,1055 1426,1073 1441,1086 1449,1100 1448,1150 1442,1165 1443,1190", 4.5], ["1410,1040 1425,1070", 3], ["1443,1190 1433,1210 1431,1250", 3.5], ["1648,1020 1649,1034 1632,1055 1626,1075 1618,1105 1606,1118", 4.5], ["1575,1135 1574,1150 1555,1175 1542,1195", 5], ["1512,1226 1490,1240", 8],
  ["1796,712 1797,745 1803,757", 5], ["1845,755 1862,727", 5], ["1817,760 1815,775", 3], ["1909,760 1911,782 1935,793 1956,801 1975,790 2010,799", 6], ["1808,780 1796,790 1790,810 1765,835", 9], ["1753,890 1757,915 1775,938 1800,957 1842,955 1878,945", 4], ["2050,765 2052,780 2046,798", 2], ["2016,800 2020,820 2032,838", 3.5], ["2077,1000 2071,1028", 5], ["2100,970 2120,945 2135,925", 7],
  ["2262,862 2270,895 2288,935", 5], ["2300,925 2305,897 2340,865", 6], ["2385,888 2405,890", 4], ["2413,930 2425,965 2440,978", 3], ["2390,953 2410,965 2413,980 2433,1000 2448,1018", 5.5], ["2452,1020 2495,1028 2510,1034", 2.5], ["2537,838 2534,852", 1.3], ["2650,728 2650,760 2640,770", 4], ["2675,1080 2700,1110 2720,1140 2722,1160 2715,1180 2705,1205", 4.5], ["2536,882 2536,905", 3], ["2274,780 2295,830", 3]
];
for (const [s, gap] of chains) {
  const p = s.split(" ").map(q => q.split(",").map(Number));
  for (let i = 1; i < p.length; i++) {
    const [x1, y1] = p[i - 1], [x2, y2] = p[i], n = Math.max(1, Math.round(Math.hypot(x2 - x1, y2 - y1) / gap));
    for (let k = 0; k < n; k++) put(x1 + (x2 - x1) * k / n + (rnd() - .5) * 2.5, y1 + (y2 - y1) * k / n + (rnd() - .5) * 2.5);
  }
}
// Islands and isolated places
const single = "887,629 900,620 941,857 949,860 950,861 958,863 961,871 966,871 1098,626 1479,791 1443,860 1385,873 1383,913 1509,910 1330,990 1334,988 1338,990 1408,835 1400,828 867,1034 871,1065 877,1067 881,1096 939,1109 997,1086 1642,1354 1506,1332 1518,1329 1685,747 1693,746 1702,753 1752,788 1755,816 1760,818 1771,812 1706,887 1714,899 1848,985 1887,983 1896,725 1902,729 1898,742 1920,752 1930,766 1985,769 1992,770 1997,771 2032,773 2036,771 2040,770 2155,912 2163,1011 2094,1052 2106,1059 2163,1106 2165,1107 2175,1103 2175,1102 2266,961 2261,924 2375,918 2464,961 2574,830 2568,782 2677,897 2671,907 2613,943 2614,942 2748,945 2823,944 2831,977 2573,980 2573,981 2524,929 2513,946 2540,1033 2533,1034 2550,1035 2544,1036 2532,1040 2551,1043 2562,1034 2451,997 2461,1000 2578,1006 2582,1004 2548,981 2558,977 2703,1016 2701,1017 2714,1009 2728,1016 2733,1020 2734,1021 2740,1031 2758,1039 2792,1046 2799,1074 2806,1087 2795,1115 2478,868 2471,879 2689,1036 2704,1044 2693,1042 2736,632 2737,633 2735,650 2595,989 2611,990 2622,991 2687,997 2708,999 1528,621 1528,633 1532,643 1532,656 1517,660 1519,663 1521,664 1525,666 1515,668 1538,665 1511,677 1541,679 1548,677 1545,684 1524,643 1514,644 1509,651 1496,654 1483,653 1482,658 1482,665 1474,676 1470,664 1475,690 1489,688 1492,693 1495,692 1503,689 1506,689 1484,697 1486,700 1480,706 1476,707 1472,708 1473,700";
single.split(" ").forEach(q => put(...q.split(",").map(Number)));

ctx.translate(-864, -612);
ctx.fillStyle = "rgba(238, 62, 118, .5)";
ctx.strokeStyle = "rgba(232, 52, 108, .55)";
ctx.lineWidth = 1.3;
for (const [x, y] of dots) { ctx.beginPath(); ctx.arc(x, y, 2.1, 0, 6.2832); ctx.fill(); ctx.stroke(); }
```
